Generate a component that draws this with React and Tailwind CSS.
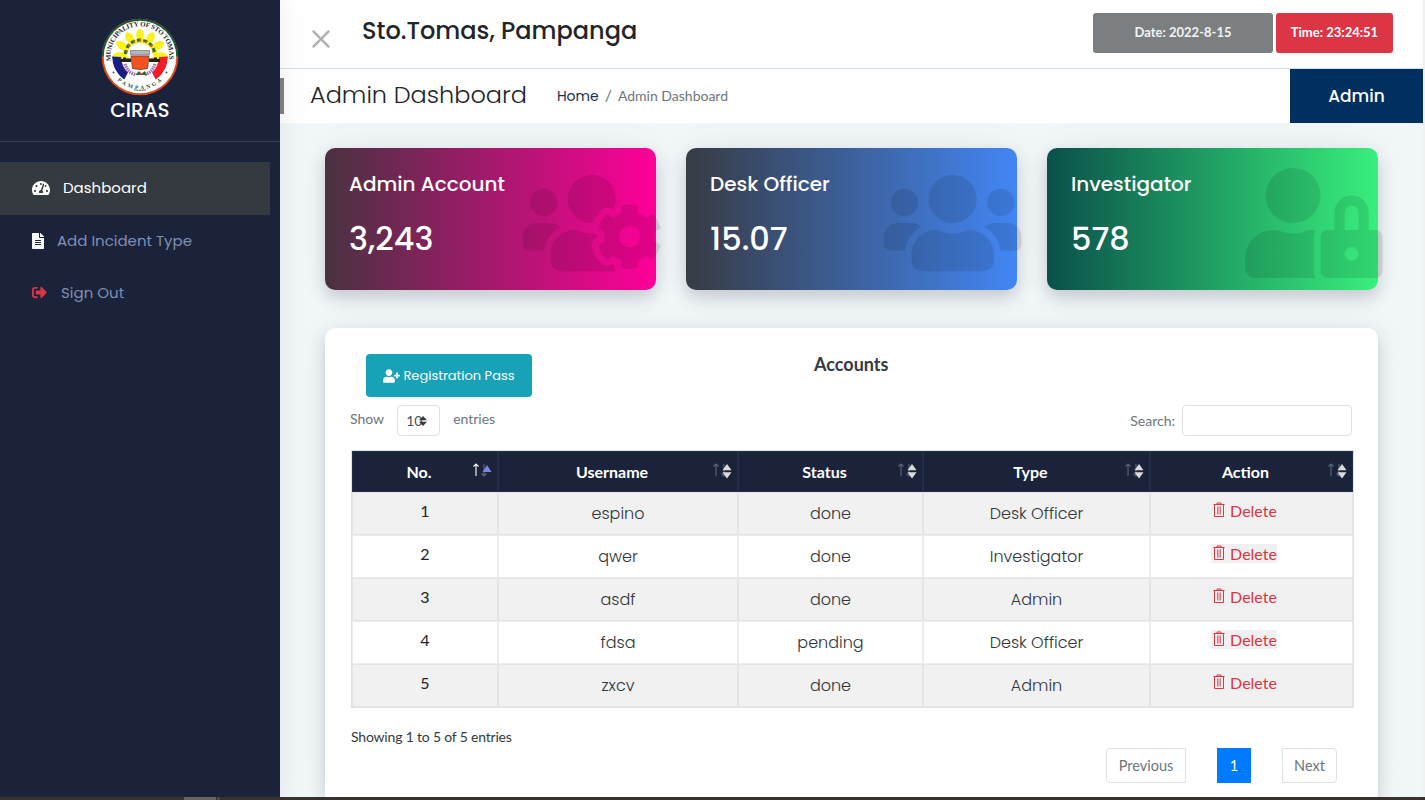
import React from "react";
import {
  FaTachometerAlt,
  FaFileAlt,
  FaSignOutAlt,
  FaUsersCog,
  FaUsers,
  FaUserLock,
  FaUserPlus,
} from "react-icons/fa";

const display = "font-['Poppins','Inter',sans-serif]";

function Seal() {
  const rays = [-90, -60, -30, 0, 30, 60, 90];
  return (
    <svg width="78" height="78" viewBox="0 0 78 78" className="block">
      <defs>
        <path id="sealTop" d="M10.2 43 A29.3 29.3 0 1 1 67.8 43" />
        <path id="sealBottom" d="M14 59.6 A32.4 32.4 0 0 0 64 59.6" />
        <clipPath id="sealInner">
          <circle cx="39" cy="38.500" r="28" />
        </clipPath>
      </defs>
      <circle cx="39" cy="39" r="38.300" fill="#e04a1e" />
      <path d="M.7 39a38.300 38.300 0 0 1 76.600 0z" fill="#1c5a35" />
      <circle cx="39" cy="39" r="36.300" fill="#fff" />
      <g clipPath="url(#sealInner)">
        {rays.map((a) => (
          <path
            key={a}
            d="M36 23 L35 16 Q36 12 39 10 Q42 12 43 16 L42 23 L44 27 H34z"
            fill="#fbf11a"
            transform={`rotate(${a} 39 38)`}
          />
        ))}
        <path d="M21 39a18 18 0 0 1 36 0z" fill="#fbf11a" />
        <path d="M25.500 39a13.500 14 0 0 1 27 0z" fill="#fff" />
        <path
          d="M24.500 36a14.500 14 0 0 1 29 0"
          fill="none"
          stroke="#2c6d34"
          strokeWidth="3"
          strokeDasharray="4 2.400"
        />
        <path
          d="M26 34.500a13 12.500 0 0 1 26 0"
          fill="none"
          stroke="#e4572e"
          strokeWidth="2"
          strokeDasharray="2 4.400"
        />
        <path d="M11 38.500 L20 39 Q21 50 27 54.500 L23 62 Q11 52 11 38.500z" fill="#1b1d86" />
        <path d="M67 38.500 L58 39 Q57 50 51 54.500 L55 62 Q67 52 67 38.500z" fill="#ee1c25" />
        <path d="M19 44v-3h3v-1.500h3v1h5v3.500zM59 44v-3h-3v-1.500h-3v1h-5v3.500z" fill="#222" />
        <path
          d="M24 46 Q26 54 34 56.500M54 46 Q52 54 44 56.500"
          fill="none"
          stroke="#a06fb3"
          strokeWidth="3.500"
          strokeDasharray="1.500 0.800"
        />
      </g>
      <path d="M30 38h18l-1.500 12.500q-7.500 2-15 0z" fill="#f0531f" stroke="#7d3a22" strokeWidth=".8" />
      <path d="M29.500 32.500h19v4.500h-19z" fill="#b5b5b5" stroke="#666" strokeWidth=".6" />
      <path d="M34 57l4-4 2 3 4-3 2 4z" fill="#2c6d34" />
      <path d="M39 54l3 3h-4z" fill="#d33" />
      <circle cx="12.500" cy="54.500" r=".9" fill="#1c5a35" />
      <circle cx="65.500" cy="54.500" r=".9" fill="#1c5a35" />
      <path d="M33 71.800q6 1 12 0" fill="none" stroke="#555" strokeWidth="1.200" strokeDasharray="1 .6" />
      <text fontFamily="Liberation Serif, serif" fontSize="6.900" fontWeight="700" fill="#26262c">
        <textPath href="#sealTop" textLength="101" lengthAdjust="spacing">
          MUNICIPALITY OF STO TOMAS
        </textPath>
      </text>
      <text fontFamily="Liberation Serif, serif" fontSize="5.600" fontWeight="700" fill="#1c5a35">
        <textPath href="#sealBottom" startOffset="3.500" textLength="49" lengthAdjust="spacing">
          PAMPANGA
        </textPath>
      </text>
    </svg>
  );
}

function NavItem({ icon, label, active, className }) {
  return (
    <li
      className={`flex items-center pl-8 ${
        active
          ? "h-[53px] w-[270px] bg-[#343a40] pb-[2px] text-white"
          : "h-[52px] pb-px text-[#818fb5]"
      }`}
    >
      {icon}
      <span className={`text-[15px] leading-none ${display} ${className}`}>{label}</span>
    </li>
  );
}

function Sidebar() {
  return (
    <aside className="relative z-10 flex w-[280px] shrink-0 flex-col bg-[#1a233a] shadow-[0_0_28px_rgba(0,0,0,0.08)]">
      <div className="flex h-[142px] flex-col items-center border-b border-[#364055] pt-[18px]">
        <Seal />
        <h3 className={`mt-1 text-[20px] leading-5 font-medium text-white ${display}`}>CIRAS</h3>
      </div>
      <ul className="mt-5">
        <NavItem
          active
          icon={<FaTachometerAlt className="h-4 w-[18px]" />}
          label="Dashboard"
          className="ml-[13px]"
        />
        <NavItem
          icon={<FaFileAlt className="h-4 w-3 text-[#f8f9fa]" />}
          label="Add Incident Type"
          className="ml-[13px]"
        />
        <NavItem
          icon={<FaSignOutAlt className="size-[15px] text-[#dc3545]" />}
          label="Sign Out"
          className="ml-[14px]"
        />
      </ul>
    </aside>
  );
}

function StatCard({ title, value, gradient, icon: Icon }) {
  return (
    <div
      className={`relative h-[142px] w-[331px] rounded-[10px] bg-linear-to-r/srgb px-6 text-white shadow-[0_0_35px_rgba(4,9,20,0.06),0_8px_16px_rgba(4,9,20,0.15)] ${gradient} ${display}`}
    >
      <h5 className="pt-[23px] text-[20px] leading-[26px] font-medium">{title}</h5>
      <p className="mt-6 text-[32px] leading-9 font-medium">{value}</p>
      <Icon className="absolute top-5 -right-[4.500px] h-[110px] w-[137.5px] text-black/10" />
    </div>
  );
}

function SortMark({ active }) {
  return (
    <svg width="20" height="18" viewBox="0 0 20 18" className="absolute top-[9px] right-[5px]">
      <g fill="none" stroke="#fff" strokeWidth="1.100">
        <path d="M4 15V3M1.500 5.500L4 3l2.500 2.500" opacity={active ? 1 : 0.3} />
        <path d="M12 3v12M9.500 12.500L12 15l2.500-2.500" opacity="0.300" />
      </g>
      {active ? (
        <path d="M10.500 11L15 4l4.500 7z" fill="#7c83e0" />
      ) : (
        <path d="M10.500 9.300L15 3l4.500 6.300zM10.500 11.200h9L15 17.500z" fill="#dcdcdc" />
      )}
    </svg>
  );
}

function TrashIcon() {
  return (
    <svg
      width="12"
      height="16"
      viewBox="0 0 12 16"
      className="shrink-0"
      fill="none"
      stroke="currentColor"
      strokeWidth="1"
    >
      <path d="M0.500 2.500h11M4 2.200V1h4v1.200M1.500 3v11.500h9V3" />
      <path d="M4.500 4.500v8M6 4.500v8M7.500 4.500v8" strokeWidth="0.700" />
    </svg>
  );
}

const columns = [
  { name: "No.", width: "w-[146px]" },
  { name: "Username", width: "w-[240px]" },
  { name: "Status", width: "w-[185px]" },
  { name: "Type", width: "w-[227px]" },
  { name: "Action", width: "w-[203px]" },
];

const rows = [
  [1, "espino", "done", "Desk Officer"],
  [2, "qwer", "done", "Investigator"],
  [3, "asdf", "done", "Admin"],
  [4, "fdsa", "pending", "Desk Officer"],
  [5, "zxcv", "done", "Admin"],
];

function AccountsTable() {
  return (
    <table className="mt-[14px] w-[1003px] table-fixed border-separate border-spacing-0 border border-[#dee2e6] text-center text-[16px]">
      <thead>
        <tr>
          {columns.map((c, i) => (
            <th
              key={c.name}
              className={`relative h-[41px] border border-[#242e46] bg-[#1a233a] p-0 pt-px pr-3 font-bold text-white ${c.width}`}
            >
              <span className="text-[16px]">{c.name}</span>
              <SortMark active={i === 0} />
            </th>
          ))}
        </tr>
      </thead>
      <tbody>
        {rows.map((r, i) => (
          <tr
            key={r[0]}
            className={
              i % 2 === 0
                ? "bg-[#f1f1f1] *:border-[#e2e4e6]"
                : "bg-white *:border-[#eaecee]"
            }
          >
            <td className="h-[43px] border p-0 pb-[5px] text-[#212529]">{r[0]}</td>
            {r.slice(1).map((v, j) => (
              <td key={j} className={`border p-0 font-light text-[#2f353a] ${display}`}>
                {v}
              </td>
            ))}
            <td className="border p-0 pb-[3px] text-[#dc3545]">
              <button className="mr-[15px] inline-flex h-[19px] items-center gap-[5px] bg-[#f0f0f0] pl-0.5 leading-[19px]">
                <TrashIcon />
                Delete
              </button>
            </td>
          </tr>
        ))}
      </tbody>
    </table>
  );
}

function AccountsPanel() {
  return (
    <section className="mt-[38px] ml-[45px] h-[480px] w-[1053px] rounded-t-[10px] bg-white pl-[26px] shadow-[0_0_35px_rgba(4,9,20,0.06),0_8px_16px_rgba(4,9,20,0.14)]">
      <div className="flex h-[77px] pt-[26px]">
        <button
          className={`ml-[15px] flex h-[43px] w-[166px] items-center justify-center gap-[3px] rounded-[4px] bg-[#17a2b8] text-[13px] text-white ${display}`}
        >
          <FaUserPlus className="h-[14px] w-[17px]" />
          <span>Registration Pass</span>
        </button>
        <h2 className="ml-[282px] text-[18px] leading-[21px] font-bold text-[#343a40]">Accounts</h2>
      </div>
      <div className="flex h-[31px] w-[1001px] items-center text-[14px] text-[#6c757d]">
        <span className="-mt-[5px] -ml-px">Show</span>
        <span className="ml-[13px] flex h-[31px] w-[43px] items-center rounded-[4px] border border-[#dee2e6] pl-2 text-[#495057]">
          10
          <svg width="8" height="10" viewBox="0 0 8 10" className="-ml-[3px]">
            <path d="M0 4.300L4 0l4 4.300zM0 5.700h8L4 10z" fill="#343a40" />
          </svg>
        </span>
        <span className="-mt-[5px] ml-[13px]">entries</span>
        <span className="ml-auto">Search:</span>
        <input
          aria-label="Search"
          className="ml-[7px] h-[31px] w-[170px] rounded-[4px] border border-[#dee2e6]"
        />
      </div>
      <AccountsTable />
      <p className="mt-5 text-[14px] leading-[18px] tracking-[-0.19px] text-[#343a40]">
        Showing 1 to 5 of 5 entries
      </p>
      <div className="mt-[2px] mr-[41px] flex h-[35px] justify-end gap-[31px] text-[14.5px] text-[#6c757d]">
        <span className="flex w-[80px] items-center justify-center rounded-l-[4px] border border-[#dee2e6]">
          Previous
        </span>
        <span className="flex w-[34px] items-center justify-center bg-[#007bff] text-white">1</span>
        <span className="flex w-[55px] items-center justify-center rounded-r-[4px] border border-[#dee2e6]">
          Next
        </span>
      </div>
    </section>
  );
}

export default function App() {
  return (
    <div className="flex h-[800px] w-[1425px] flex-col overflow-hidden bg-[#f1f1f1] font-['Lato',sans-serif]">
      <div className="flex h-[797px] w-[1423px] overflow-hidden bg-[#f1f6f9]">
        <Sidebar />
        <main className="flex w-[1143px] flex-col">
          <header className="flex h-[69px] shrink-0 border-b border-[#d4e1e8] bg-white">
            <svg width="20" height="20" viewBox="0 0 20 20" className="mt-[29px] ml-[31px]">
              <path d="M2 2l16 16M18 2l-16 16" stroke="#f3f3f3" strokeWidth="5" />
              <path d="M1.800 1.800l16.400 16.400M18.200 1.800l-16.400 16.400" stroke="#b0a9a9" strokeWidth="2" />
            </svg>
            <h1
              className={`mt-[14px] ml-[31px] text-[24px] leading-[34px] font-medium text-[#212529] ${display}`}
            >
              Sto.Tomas, Pampanga
            </h1>
            <div className="mt-[13px] mr-[30px] ml-auto flex h-10 gap-[3px] text-[13px] font-bold text-white">
              <span className="flex w-[180px] items-center justify-center rounded-[3px] bg-[#7b7f82] pb-px text-[#f3f3f3]">
                Date: 2022-8-15
              </span>
              <span className="flex w-[117px] items-center justify-center rounded-[3px] bg-[#dc3545] pb-px">
                Time: 23:24:51
              </span>
            </div>
          </header>
          <div className="flex h-[54px] shrink-0 items-center bg-white">
            <span className="z-20 h-9 w-1 bg-[#7f7c7b]" />
            <h4
              className={`-mt-0.5 ml-[26px] text-[24px] leading-none font-light text-[#212529] ${display}`}
            >
              Admin Dashboard
            </h4>
            <nav className="-mt-0.5 ml-[30px] flex gap-[6px] text-[14px] text-[#6c757d]">
              <span className={`relative top-px text-[#17304f] ${display}`}>Home</span>
              <span className="text-[16px] leading-[20px]">/</span>
              <span>Admin Dashboard</span>
            </nav>
            <span
              className={`ml-auto flex h-[54px] w-[133px] items-center justify-center bg-[#003060] pt-px text-[17px] font-medium text-white ${display}`}
            >
              Admin
            </span>
          </div>
          <div className="mt-[25px] ml-[45px] flex shrink-0 gap-[30px]">
            <StatCard
              title="Admin Account"
              value="3,243"
              gradient="from-[#493240] to-[#ff0099]"
              icon={FaUsersCog}
            />
            <StatCard
              title="Desk Officer"
              value="15.07"
              gradient="from-[#373b44] to-[#4286f4]"
              icon={FaUsers}
            />
            <StatCard
              title="Investigator"
              value="578"
              gradient="from-[#0a504a] to-[#38ef7d]"
              icon={FaUserLock}
            />
          </div>
          <AccountsPanel />
        </main>
      </div>
      <div className="flex h-[3px] bg-[#38322e]">
        <span className="ml-[184px] w-8 bg-[#696361]" />
        <span className="ml-px w-[3px] bg-[#504a47]" />
      </div>
    </div>
  );
}
